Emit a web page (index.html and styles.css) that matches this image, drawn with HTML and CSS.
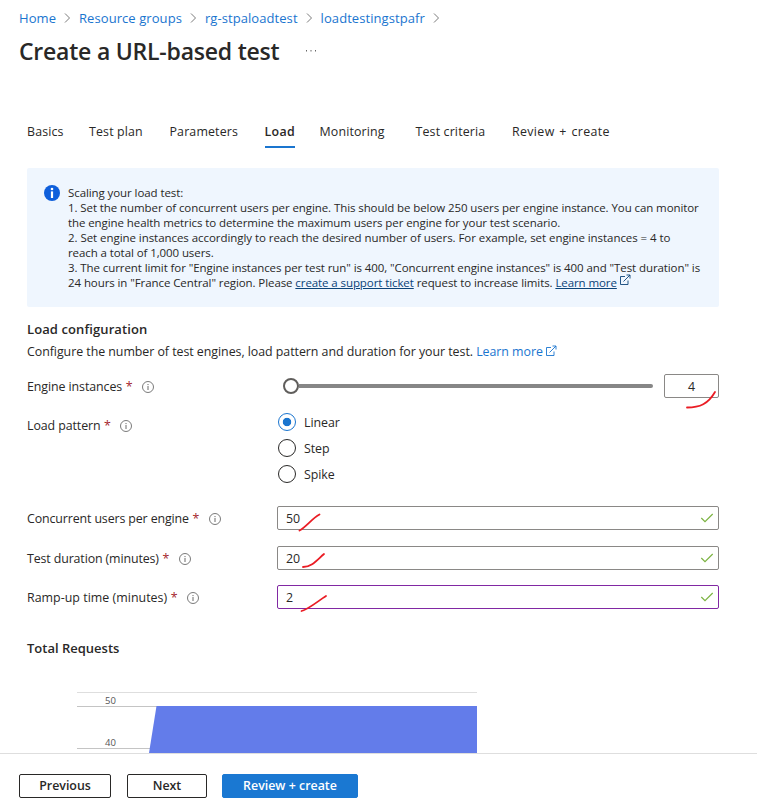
FILE: index.html
```html
<!DOCTYPE html>
<html lang="en">
<head>
<meta charset="utf-8">
<title>Create a URL-based test</title>
<link rel="stylesheet" href="styles.css">
</head>
<body>
<svg class="defs" aria-hidden="true">
  <symbol id="chev" viewBox="0 0 7 10"><path d="M1 .5 5.5 5 1 9.500" fill="none" stroke="#7b7b7b"/></symbol>
  <symbol id="info" viewBox="0 0 12 12"><circle cx="6" cy="6" r="5.500" fill="none" stroke="#6b6b6b" stroke-width=".9"/><path d="M6 5v4M6 3v1.100" stroke="#6b6b6b" fill="none"/></symbol>
  <symbol id="ext" viewBox="0 0 12 12"><path d="M6 2.500H1.500v8h7.500V6.500M4.500 7.500 11 1M7.500 1H11v3.500" fill="none" stroke="currentColor" stroke-width=".9"/></symbol>
  <symbol id="check" viewBox="0 0 14 10"><path d="M1.300 5 5 8.600 12.700 1" fill="none" stroke="#7cb342" stroke-width="1.200"/></symbol>
</svg>
<main class="page">
  <nav class="crumbs">
    <a>Home</a><svg><use href="#chev"/></svg>
    <a>Resource groups</a><svg><use href="#chev"/></svg>
    <a>rg-stpaloadtest</a><svg><use href="#chev"/></svg>
    <a>loadtestingstpafr</a><svg><use href="#chev"/></svg>
  </nav>
  <header class="title"><h1>Create a URL-based test</h1><svg class="dots" viewBox="0 0 12 2"><path d="M1 0h1v1.500H1zM5.500 0h1v1.500h-1zM10 0h1v1.500h-1z" fill="#666"/></svg></header>
  <nav class="tabs">
    <a>Basics</a><a>Test plan</a><a>Parameters</a><a class="active"><span>Load</span></a><a>Monitoring</a><a>Test criteria</a><a class="review">Review + create</a>
  </nav>
  <section class="notice">
    <svg class="badge" viewBox="0 0 16 16"><circle cx="8" cy="8" r="8" fill="#0f5fdb"/><circle cx="8" cy="4" r="1.300" fill="#fff"/><path d="M8 6.400v6.600" stroke="#fff" stroke-width="2.200"/></svg>
    <div class="lines">
      <p>Scaling your load test:</p>
      <p>1. Set the number of concurrent users per engine. This should be below 250 users per engine instance. You can monitor</p>
      <p>the engine health metrics to determine the maximum users per engine for your test scenario.</p>
      <p class="wide">2. Set engine instances accordingly to reach the desired number of users. For example, set engine instances = 4 to</p>
      <p>reach a total of 1,000 users.</p>
      <p>3. The current limit for "Engine instances per test run" is 400, "Concurrent engine instances" is 400 and "Test duration" is</p>
      <p>24 hours in "France Central" region. Please <a>create a support ticket</a> request to increase limits. <a>Learn more</a> <svg class="ext"><use href="#ext"/></svg></p>
    </div>
  </section>
  <h2>Load configuration</h2>
  <p class="desc">Configure the number of test engines, load pattern and duration for your test. <a>Learn more <svg class="ext"><use href="#ext"/></svg></a></p>
  <form class="form">
    <div class="row engines">
      <label><span>Engine instances</span><b>*</b><svg class="info"><use href="#info"/></svg></label>
      <div class="slider"><i class="knob"></i><i class="track"></i></div>
      <div class="num">4<svg class="mark m1" viewBox="0 0 32 20"><path d="M1 17.500C14 17.500 22 14 29 2" /></svg></div>
    </div>
    <div class="row pattern">
      <label><span>Load pattern</span><b>*</b><svg class="info"><use href="#info"/></svg></label>
      <div class="radios">
        <div class="radio on"><i></i><span>Linear</span></div>
        <div class="radio"><i></i><span>Step</span></div>
        <div class="radio"><i></i><span>Spike</span></div>
      </div>
    </div>
    <div class="row users">
      <label><span>Concurrent users per engine</span><b>*</b><svg class="info"><use href="#info"/></svg></label>
      <div class="input"><span>50</span><svg class="check"><use href="#check"/></svg><svg class="mark m2" viewBox="0 0 24 20"><path d="M1.500 17.500C8 14 14 5.500 21.500 1.500"/></svg></div>
    </div>
    <div class="row duration">
      <label><span>Test duration (minutes)</span><b>*</b><svg class="info"><use href="#info"/></svg></label>
      <div class="input"><span>20</span><svg class="check"><use href="#check"/></svg><svg class="mark m3" viewBox="0 0 26 18"><path d="M2 15C11 15 16 8 23 2"/></svg></div>
    </div>
    <div class="row ramp">
      <label><span>Ramp-up time (minutes)</span><b>*</b><svg class="info"><use href="#info"/></svg></label>
      <div class="input focus"><span>2</span><svg class="check"><use href="#check"/></svg><svg class="mark m4" viewBox="0 0 28 20"><path d="M1.500 17C9 15 18 7 26 2"/></svg></div>
    </div>
  </form>
  <h2 class="total">Total Requests</h2>
  <svg class="chart" viewBox="0 0 400 61">
    <path d="M0 .5H400" stroke="#dedede"/>
    <path d="M0 14.500H400M0 56.500H400" stroke="#c4c4c4"/>
    <path d="M79.500 14H400V61H72Z" fill="#637cea"/>
    <text x="28" y="12">50</text><text x="28" y="54">40</text>
  </svg>
</main>
<footer class="actions"><button class="prev">Previous</button><button class="next">Next</button><button class="primary">Review + create</button></footer>
</body>
</html>
```
FILE: styles.css
```css
* { box-sizing: border-box; margin: 0; padding: 0; }
body { width: 757px; height: 809px; overflow: hidden; display: flex; flex-direction: column; background: #fff; color: #292827; font: 12.4px/18px "Open Sans", "Noto Sans", sans-serif; white-space: nowrap; }
.defs { position: absolute; width: 0; height: 0; }
svg { display: block; flex: none; }
.page { height: 753px; overflow: hidden; padding: 0 38px 0 27px; }
a { color: #1a75cf; }
.crumbs { display: flex; align-items: center; height: 18px; margin: 9px 0 0 -8px; font-size: 13px; letter-spacing: .07px; }
.crumbs svg { width: 7px; height: 10px; margin: 0 8px; }
.title { display: flex; align-items: center; height: 32px; margin: 8px 0 0 -8px; }
h1 { font-size: 23px; line-height: 32px; font-weight: 600; width: 286px; letter-spacing: -.22px; }
.dots { width: 12px; height: 2px; }
.tabs { display: grid; grid-template-columns: 62px 80.5px 95px 55px 96px 96.500px 110px; margin-top: 56px; height: 25px; letter-spacing: .15px; }
.tabs a { color: #292827; }
.tabs .active span { display: inline-block; height: 25px; border-bottom: 2px solid #1a75cf; font-weight: 600; letter-spacing: .3px; }
.tabs .review { letter-spacing: .35px; word-spacing: 1.2px; }
.notice { display: flex; margin-top: 20px; height: 139px; padding: 17px 17px; background: #eff6fe; border-radius: 2px; }
.badge { width: 16px; height: 16px; margin-right: 8px; }
.lines { font-size: 11.5px; line-height: 15px; letter-spacing: -.087px; }
.lines p { height: 15px; }
.lines .wide { letter-spacing: -.055px; }
.lines a { color: #0b4378; text-decoration: underline; }
.ext { display: inline-block; width: 12px; height: 12px; color: #1a75cf; vertical-align: -1px; margin-left: -1px; }
.lines .ext { color: #0b4378; vertical-align: 1px; margin-top: -3px; }
h2 { font-size: 13px; line-height: 18px; font-weight: 600; margin-top: 13px; letter-spacing: .1px; }
.desc { margin-top: 5px; letter-spacing: -.045px; }
.row { display: flex; }
.row label { display: flex; width: 250px; align-items: center; height: 24px; padding-top: 1px; }
.row b { color: #a4262c; margin-left: 3.5px; font-weight: 400; }
.info { width: 12px; height: 12px; margin-left: 9.5px; }
.engines { margin-top: 13px; }
.engines label { letter-spacing: -.08px; }
.pattern label { letter-spacing: -.08px; }
.users label { letter-spacing: -.12px; }
.duration label { letter-spacing: -.12px; }
.ramp label { letter-spacing: .03px; }
.slider { display: flex; align-items: center; width: 370px; height: 24px; margin-right: 11px; margin-left: 6px; }
.knob { width: 16px; height: 16px; border: 2px solid #605e5c; border-radius: 50%; flex: none; }
.track { height: 4px; flex: 1; background: #868686; border-radius: 0 2px 2px 0; }
.num { position: relative; width: 55px; height: 24px; border: 1px solid #8a8886; border-radius: 2px; text-align: center; line-height: 24px; }
.mark { position: absolute; fill: none; stroke: #ea1c24; stroke-width: 1.8; stroke-linecap: round; }
.m1 { width: 32px; height: 20px; left: 21px; top: 15px; }
.m2 { width: 24px; height: 20px; left: 20px; top: 6px; }
.m3 { width: 26px; height: 18px; left: 23px; top: 5px; }
.m4 { width: 28px; height: 20px; left: 22px; top: 8px; }
.pattern { margin-top: 15px; }
.radios { display: grid; gap: 8px; margin-left: 1px; }
.radio { display: flex; align-items: center; height: 18px; letter-spacing: -.05px; }
.radio span { padding-top: 2px; }
.radio i { width: 18px; height: 18px; border: 1px solid #292827; border-radius: 50%; margin-right: 8px; }
.radio.on i { border-color: #1a75cf; background: radial-gradient(circle, #1a75cf 3.800px, #fff 4.600px); }
.users { margin-top: 23px; }
.duration { margin-top: 16px; }
.ramp { margin-top: 15px; }
.input { position: relative; display: flex; align-items: center; justify-content: space-between; width: 442px; height: 24px; border: 1px solid #8a8886; border-radius: 2px; padding: 0 4px 0 8px; }
.input span { padding-top: 1px; }
.input.focus { border-color: #8128a3; }
.check { width: 14px; height: 10px; }
.total { margin-top: 30px; letter-spacing: 0; }
.chart { width: 400px; height: 61px; margin: 35px 0 0 50px; }
.chart text { font-size: 9.5px; fill: #555; }
.actions { height: 56px; border-top: 1px solid #dedede; display: flex; padding: 20px 19px 0; }
button { height: 24px; border: 1px solid #292827; border-radius: 2px; background: #fff; color: #292827; font: 600 12.4px/20px "Open Sans", "Noto Sans", sans-serif; }
.prev { width: 92px; margin-right: 16px; }
.next { width: 80px; margin-right: 15px; }
.primary { width: 136px; background: #1a78d2; border-color: #1a78d2; color: #fff; }
```
